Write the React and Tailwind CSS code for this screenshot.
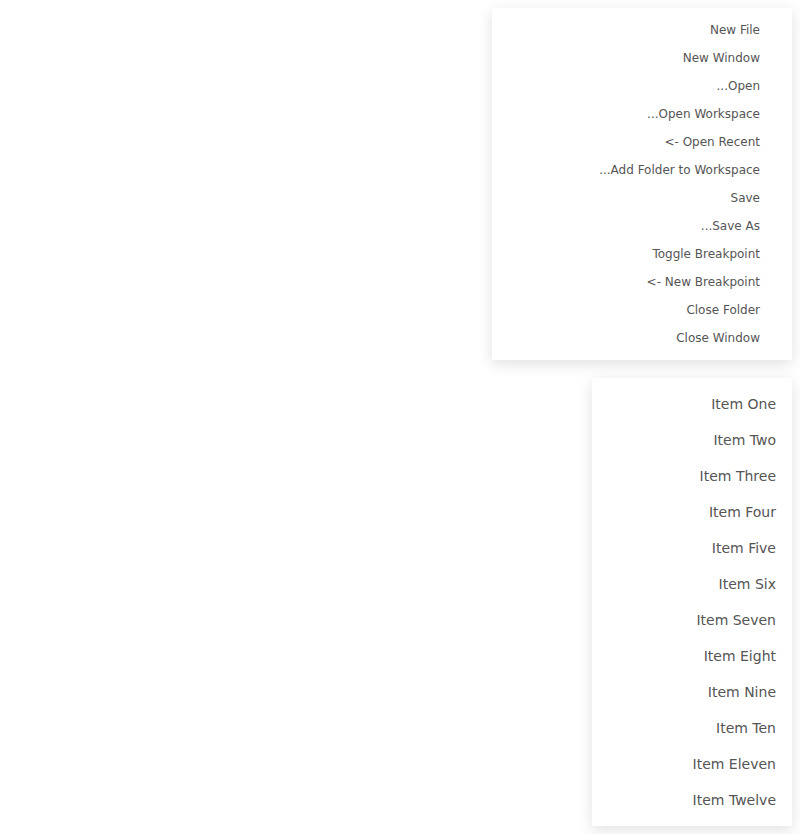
const fileItems = [
  "New File",
  "New Window",
  "...Open",
  "...Open Workspace",
  "<- Open Recent",
  "...Add Folder to Workspace",
  "Save",
  "...Save As",
  "Toggle Breakpoint",
  "<- New Breakpoint",
  "Close Folder",
  "Close Window",
];

const numberItems = [
  "Item One",
  "Item Two",
  "Item Three",
  "Item Four",
  "Item Five",
  "Item Six",
  "Item Seven",
  "Item Eight",
  "Item Nine",
  "Item Ten",
  "Item Eleven",
  "Item Twelve",
];

export default function App() {
  return (
    <div
      className="min-h-screen bg-white flex flex-col items-end pt-2 pr-2 gap-[18px]"
      style={{ fontFamily: '"DejaVu Sans", sans-serif' }}
    >
      {/* File menu */}
      <div className="w-[300px] bg-white py-2 shadow-[0_4px_14px_rgba(0,0,0,0.12)]">
        {fileItems.map((item) => (
          <div
            key={item}
            className="h-7 flex items-center justify-end pr-8 text-[12px] text-[#555555] whitespace-pre"
          >
            {item}
          </div>
        ))}
      </div>

      {/* Items menu */}
      <div className="w-[200px] bg-white py-2 shadow-[0_4px_14px_rgba(0,0,0,0.12)]">
        {numberItems.map((item) => (
          <div
            key={item}
            className="h-9 flex items-center justify-end pr-4 text-[14px] text-[#555555]"
          >
            {item}
          </div>
        ))}
      </div>
    </div>
  );
}
